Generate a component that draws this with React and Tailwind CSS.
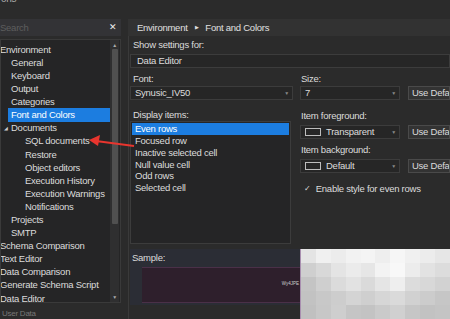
import React from "react";

const tree = [
  { t: "Environment", l: 0 },
  { t: "General", l: 1 },
  { t: "Keyboard", l: 1 },
  { t: "Output", l: 1 },
  { t: "Categories", l: 1 },
  { t: "Font and Colors", l: 1, sel: true },
  { t: "Documents", l: 1, caret: true },
  { t: "SQL documents", l: 2 },
  { t: "Restore", l: 2 },
  { t: "Object editors", l: 2 },
  { t: "Execution History", l: 2 },
  { t: "Execution Warnings", l: 2 },
  { t: "Notifications", l: 2 },
  { t: "Projects", l: 1 },
  { t: "SMTP", l: 1 },
  { t: "Schema Comparison", l: 0 },
  { t: "Text Editor", l: 0 },
  { t: "Data Comparison", l: 0 },
  { t: "Generate Schema Script", l: 0 },
  { t: "Data Editor", l: 0 },
];

const items = ["Even rows", "Focused row", "Inactive selected cell", "Null value cell", "Odd rows", "Selected cell"];

const mosaic = [
  "bg-[#e4e4e4]", "bg-[#f0f0f0]", "bg-[#ececec]", "bg-[#f2f2f2]", "bg-[#f4f4f4]", "bg-[#eeeeee]", "bg-[#f6f6f6]", "bg-[#f0f0f0]", "bg-[#ececec]", "bg-[#e6e6e6]",
  "bg-[#cfcfcf]", "bg-[#d8d8d8]", "bg-[#e4e4e4]", "bg-[#ebebeb]", "bg-[#e6e6e6]", "bg-[#f3f3f3]", "bg-[#f8f8f8]", "bg-[#ececec]", "bg-[#e2e2e2]", "bg-[#dcdcdc]",
  "bg-[#c4c4c4]", "bg-[#cfcfcf]", "bg-[#dbdbdb]", "bg-[#e2e2e2]", "bg-[#dadada]", "bg-[#e5e5e5]", "bg-[#eeeeee]", "bg-[#dcdcdc]", "bg-[#d8d8d8]", "bg-[#d2d2d2]",
  "bg-[#c2c2c2]", "bg-[#c8c8c8]", "bg-[#cdcdcd]", "bg-[#d4d4d4]", "bg-[#cfcfcf]", "bg-[#d6d6d6]", "bg-[#dadada]", "bg-[#d1d1d1]", "bg-[#cccccc]", "bg-[#c6c6c6]",
  "bg-[#c0c0c0]", "bg-[#c7c7c7]", "bg-[#cecece]", "bg-[#c5c5c5]", "bg-[#c3c3c3]", "bg-[#cacaca]", "bg-[#d0d0d0]", "bg-[#c6c6c6]", "bg-[#c2c2c2]", "bg-[#c4c4c4]",
];

function Swatch() {
  return <span className="inline-block w-[16px] h-[8px] border border-[#bdbdbd] mr-[5px]" />;
}

function Select({ children, w }) {
  return (
    <div className={`${w} shrink-0 h-[14px] bg-[#262626] border border-[#3c3c3c] flex items-center justify-between pl-[4px] pr-[3px]`}>
      <span className="flex items-center">{children}</span>
      <span className="text-[5px] text-[#888]">▼</span>
    </div>
  );
}

function UseDefault() {
  return (
    <div className="ml-[8px] h-[14px] flex-1 min-w-0 bg-[#333333] border border-[#4a4a4a] flex items-center pl-[3px] whitespace-nowrap overflow-hidden">
      Use Default
    </div>
  );
}

export default function App() {
  return (
    <div
      className="relative w-[450px] h-[319px] overflow-hidden bg-[#2b2b2b] text-[#dcdcdc] text-[9.5px] tracking-[-0.25px] leading-none flex flex-col"
      style={{ fontFamily: "'Liberation Sans', Arial, sans-serif" }}
    >
      {/* title strip */}
      <div className="h-[19px] overflow-hidden pl-[1px] shrink-0">
        <div className="-mt-[6px] text-[10px] text-[#aaa]">ons</div>
      </div>

      <div className="flex items-start h-[300px] shrink-0">
        {/* left column */}
        <div className="w-[121px] shrink-0 flex flex-col">
          <div className="h-[17px] bg-[#333336] flex items-center justify-between pr-[4px]">
            <span className="text-[#5e5e5e]">Search</span>
            <span className="text-[#eee] text-[9px]">✕</span>
          </div>
          <div className="h-[264px] mt-[3px] bg-[#252526] border border-[#3a3a3a] flex">
            <div className="flex-1 min-w-0 pt-[3px] overflow-hidden">
              {tree.map((n) => (
                <div
                  key={n.t}
                  className={`relative h-[13.1px] flex items-center whitespace-nowrap ${
                    n.sel ? "ml-[7px] pl-[3px] bg-[#1c7de0] text-white" : n.l === 0 ? "-ml-[1px]" : n.l === 1 ? "pl-[10px]" : "pl-[24px]"
                  }`}
                >
                  {n.caret && <span className="absolute left-[3px] text-[5px] text-[#ccc]">◢</span>}
                  {n.t}
                </div>
              ))}
            </div>
            <div className="w-[9px] shrink-0 bg-[#2f2f30] flex flex-col items-center pt-[3px] pb-[2px] mr-[1px]">
              <span className="text-[5px] text-[#aaa] h-[6px]">▲</span>
              <div className="w-[6px] h-[175px] bg-[#505050] rounded-[1px]" />
              <div className="flex-1" />
              <span className="text-[5px] text-[#aaa]">▼</span>
            </div>
          </div>
        </div>

        {/* right column */}
        <div className="flex-1 min-w-0 ml-[7px] flex flex-col">
          <div className="h-[17px] bg-[#323232] flex items-center pl-[9px] gap-[7px] text-[#e0e0e0]">
            <span>Environment</span>
            <span className="text-[5px]">▶</span>
            <span>Font and Colors</span>
          </div>
          <div className="h-[283px] border-l border-[#3a3a3a] pl-[1px] flex flex-col">
            <div className="mt-[4px] pl-[3px] h-[10px]">Show settings for:</div>
            <div className="mt-[4px] h-[14px] bg-[#262626] border border-[#3c3c3c] flex items-center pl-[6px]">Data Editor</div>

            <div className="flex mt-[6px]">
              <div className="w-[163px] shrink-0 flex flex-col">
                <div className="pl-[3px] h-[10px]">Font:</div>
                <div className="mt-[2px] flex">
                  <Select w="w-full">Synusic_IV50</Select>
                </div>
              </div>
              <div className="ml-[7px] flex-1 min-w-0 flex flex-col">
                <div className="pl-[1px] h-[10px]">Size:</div>
                <div className="mt-[2px] flex">
                  <Select w="w-[100px]">7</Select>
                  <UseDefault />
                </div>
              </div>
            </div>

            <div className="flex mt-[10px]">
              <div className="w-[161px] shrink-0 flex flex-col">
                <div className="pl-[3px] h-[10px]">Display items:</div>
                <div className="mt-[1px] h-[123px] bg-[#252526] border border-[#3c3c3c] pt-[1px] px-[1px]">
                  {items.map((it, i) => (
                    <div
                      key={it}
                      className={`h-[11.8px] flex items-center pl-[3px] ${i === 0 ? "bg-[#1c7de0] text-white" : ""}`}
                    >
                      {it}
                    </div>
                  ))}
                </div>
              </div>
              <div className="ml-[9px] flex-1 min-w-0 flex flex-col pt-[1px]">
                <div className="pl-[1px] h-[10px]">Item foreground:</div>
                <div className="mt-[4px] flex">
                  <Select w="w-[100px]"><Swatch />Transparent</Select>
                  <UseDefault />
                </div>
                <div className="pl-[1px] mt-[6px] h-[10px]">Item background:</div>
                <div className="mt-[4px] flex">
                  <Select w="w-[100px]"><Swatch />Default</Select>
                  <UseDefault />
                </div>
                <div className="mt-[11px] pl-[4px] flex items-center gap-[5px] whitespace-nowrap">
                  <span className="text-[8px]">✓</span>
                  <span>Enable style for even rows</span>
                </div>
              </div>
            </div>

            <div className="flex mt-[5px]">
              <div className="w-[170px] shrink-0 flex flex-col bg-[#2b2d35] pt-[4px] h-[56px]">
                <div className="pl-[2px]">Sample:</div>
                <div className="mt-[4px] ml-[12px] h-[36px] bg-[#2e1f2c] border-y border-[#4a3048] flex items-center justify-end pr-[1px] text-[4.5px] text-[#ccc] tracking-normal">
                  Wy4JPE
                </div>
              </div>
              <div className="flex-1 grid grid-cols-10 grid-rows-5 h-[70px] border-l border-[#a98fb0]">
                {mosaic.map((c, i) => (
                  <div key={i} className={c} />
                ))}
              </div>
            </div>
          </div>
        </div>
      </div>

      {/* red arrow */}
      <svg className="absolute left-0 top-0 pointer-events-none" width="450" height="319">
        <line x1="96" y1="141" x2="134" y2="146" stroke="#e8352e" strokeWidth="2" />
        <polygon points="89,140 100,135 98,146" fill="#e8352e" />
      </svg>

      <div className="absolute left-[2px] bottom-[1px] text-[8px] text-[#777]">User Data</div>
    </div>
  );
}
